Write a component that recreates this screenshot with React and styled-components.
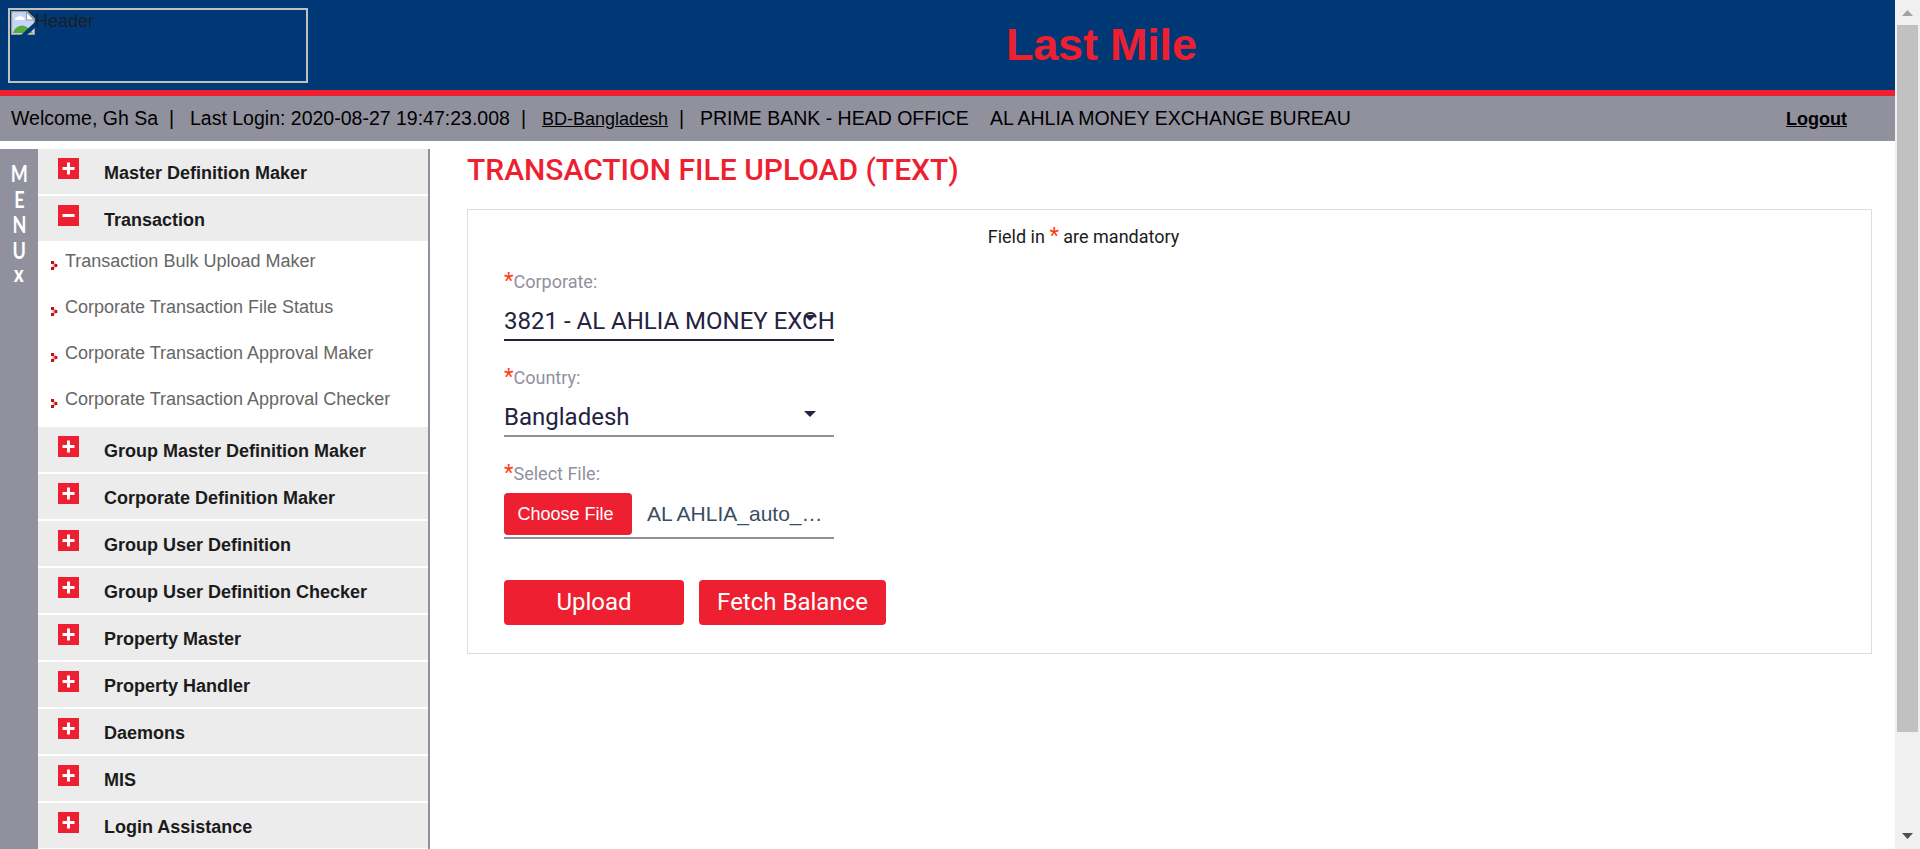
import React from 'react';
import styled, { createGlobalStyle } from 'styled-components';

const RED = '#ee1f30';
const GREY = '#91919e';
const NAVY = '#23233f';
const SANS = '"Liberation Sans", Arial, sans-serif';

const GlobalStyle = createGlobalStyle`
  *, *::before, *::after { box-sizing: border-box; }
  body { margin: 0; background: #fff; font-family: Roboto, "Liberation Sans", sans-serif; overflow: hidden; }
`;

const Screen = styled.div`
  display: flex;
  width: 100%;
  height: 849px;
  overflow: hidden;
`;

const Page = styled.div`
  flex: 1;
  min-width: 0;
  display: flex;
  flex-direction: column;
`;

const Header = styled.header`
  display: flex;
  flex: none;
  height: 96px;
  background: #003876;
  border-bottom: 6px solid ${RED};
  padding: 8px;
`;

const Logo = styled.div`
  display: flex;
  width: 300px;
  height: 75px;
  border: 2px solid #c0c0c0;
  padding: 1px;
  font: 18px/20px ${SANS};
  color: #1b1f24;
`;

const Brand = styled.h1`
  margin: 0 0 0 698px;
  font: bold 45px/52px ${SANS};
  letter-spacing: -0.2px;
  padding-top: 11px;
  height: 63px;
  color: ${RED};
  white-space: nowrap;
`;

const InfoBar = styled.div`
  display: flex;
  flex: none;
  height: 45px;
  padding: 0 48px 0 11px;
  background: ${GREY};
  color: #000;
  font: 19.5px/44px ${SANS};
  white-space: pre;
`;

const Info = styled.span`
  flex: none;
  width: ${(p) => p.$w}px;
`;

const InfoLink = styled.a`
  flex: none;
  width: ${(p) => p.$w || 'auto'};
  margin-left: ${(p) => (p.$end ? 'auto' : 0)};
  font-size: 18px;
  font-weight: ${(p) => (p.$end ? 700 : 400)};
  line-height: 46px;
  text-decoration: underline;
`;

const Body = styled.div`
  display: flex;
  flex: 1;
  min-height: 0;
  padding-top: 8px;
`;

const Strip = styled.div`
  flex: none;
  width: 38px;
  background: ${GREY};
  padding-top: 12px;
  display: flex;
  flex-direction: column;
  align-items: center;
  color: #fff;
  font: 700 22px/25.5px Lato, "Open Sans", sans-serif;
`;

const StripLetter = styled.span`
  height: 25.5px;
  line-height: ${(p) => (p.$bold ? 22 : 25.5)}px;
  transform: scaleX(0.82);
  font-weight: ${(p) => (p.$bold ? 900 : 700)};
`;

const Menu = styled.nav`
  flex: none;
  width: 392px;
  border-right: 2px solid ${GREY};
  font-family: ${SANS};
  overflow: hidden;
`;

const MenuItem = styled.div`
  display: flex;
  gap: 25px;
  height: 45px;
  margin-bottom: ${(p) => (p.$open ? 0 : 2)}px;
  padding: 9px 0 0 20px;
  background: #ececec;
  color: #1b1b1b;
  font-size: 18px;
  font-weight: 700;
  line-height: 31px;
`;

const SubMenu = styled.div`
  height: 186px;
`;

const SubItem = styled.div`
  display: flex;
  gap: 7px;
  height: 46px;
  padding-left: 13px;
  font-size: 18px;
  line-height: 41px;
  color: #666;
  svg { margin-top: 20px; }
`;

const Main = styled.main`
  flex: 1;
  padding: 0 23px 0 37px;
`;

const Title = styled.h2`
  margin: 0;
  height: 60px;
  font-size: 30px;
  font-weight: 500;
  line-height: 41px;
  color: ${RED};
`;

const Panel = styled.section`
  height: 445px;
  border: 1px solid #ddd;
  padding: 17px 36px 0;
`;

const Mandatory = styled.p`
  margin: 0;
  height: 44px;
  padding-right: 172px;
  text-align: center;
  font-size: 18px;
  line-height: 20px;
  color: #1b1b1b;
`;

const Star = styled.span`
  color: #ff3b10;
  font-size: 22px;
  line-height: 1px;
`;

const Field = styled.div`
  width: 330px;
  height: ${(p) => p.$h}px;
`;

const Label = styled.label`
  display: block;
  height: 22px;
  font-size: 18px;
  line-height: 22px;
  color: #91919e;
  white-space: nowrap;
`;

const Select = styled.div`
  position: relative;
  height: 48px;
  border-bottom: 2px solid ${(p) => (p.$active ? NAVY : GREY)};
  color: ${NAVY};
  font-size: 24px;
  line-height: 56px;
  white-space: nowrap;
`;

const Caret = styled.svg`
  position: absolute;
  left: 300px;
  top: 22px;
`;

const FileRow = styled.div`
  display: flex;
  gap: 15px;
  height: 54px;
  padding-top: 8px;
  border-bottom: 2px solid ${GREY};
  font: 21px/42px ${SANS};
  color: #3a4d63;
  white-space: nowrap;
`;

const ChooseFile = styled.button`
  width: 128px;
  height: 42px;
  border: 0;
  border-radius: 4px;
  background: ${RED};
  color: #fff;
  font: 18px/42px ${SANS};
  padding: 0 5px 0 0;
`;

const FileName = styled.span`
  line-height: 42px;
`;

const Actions = styled.div`
  display: flex;
  gap: 15px;
`;

const Action = styled.button`
  width: ${(p) => p.$w}px;
  height: 45px;
  border: 0;
  border-radius: 4px;
  background: ${RED};
  color: #fff;
  font: 24px/45px Roboto, sans-serif;
  padding: 0;
`;

const ScrollBar = styled.div`
  flex: none;
  width: 25px;
  display: flex;
  flex-direction: column;
  align-items: center;
  justify-content: space-between;
  background: #f0f0f0;
  svg { display: block; flex: none; }
`;

const Thumb = styled.div`
  width: 21px;
  height: 707px;
  margin-bottom: auto;
  background: #c1c1c1;
`;

const IconBox = styled.svg`
  flex: none;
`;

const Toggle = ({ open }) => (
  <IconBox width="21" height="21" viewBox="0 0 21 21">
    <rect width="21" height="21" fill={RED} />
    <rect x="4.5" y="9" width="12" height="3" fill="#fff" />
    {!open && <rect x="9" y="4.5" width="3" height="12" fill="#fff" />}
  </IconBox>
);

const Bullet = () => (
  <IconBox width="7" height="9" viewBox="0 0 7 9">
    <path d="M0 0h3v3H0zM0 6h3v3H0zM3.300 3h3v3h-3z" fill="#bb1319" />
    <path d="M1.500 3h1.800v3h-1.800zM3 1.500h1.500v1.500H3zM3 6h1.500v1.500H3z" fill="#e9a9a9" />
  </IconBox>
);

const BrokenImage = () => (
  <IconBox width="24" height="24" viewBox="0 0 24 24">
    <path d="M0 0h16l8 8v16H0z" fill="#fff" />
    <path d="M2 2h14l6 6v14H2z" fill="#c3d5f8" />
    <path d="M4 9q0-3 3-3 2-3 4.500 0 2.500 0 2 3z" fill="#fff" />
    <path d="M2 22q2-7 9-7.500 7 1 11 7.500z" fill="#57ac34" />
    <path d="M.75 23.250V.75H16L23.250 8v15.250z" fill="none" stroke="#9a9a9a" strokeWidth="1.500" />
    <path d="M15.500 1v8H23z" fill="#fff" stroke="#9a9a9a" />
    <path d="M24 11v6l-8 7h-6z" fill="#003876" />
  </IconBox>
);

const Down = () => (
  <Caret width="12" height="6" viewBox="0 0 12 6">
    <path d="M0 0h12L6 6z" fill={NAVY} />
  </Caret>
);

const SUB_ITEMS = [
  'Transaction Bulk Upload Maker',
  'Corporate Transaction File Status',
  'Corporate Transaction Approval Maker',
  'Corporate Transaction Approval Checker',
];

const ITEMS = [
  'Group Master Definition Maker',
  'Corporate Definition Maker',
  'Group User Definition',
  'Group User Definition Checker',
  'Property Master',
  'Property Handler',
  'Daemons',
  'MIS',
  'Login Assistance',
];

export default function App() {
  return (
    <Screen>
      <GlobalStyle />
      <Page>
        <Header>
          <Logo><BrokenImage />Header</Logo>
          <Brand>Last Mile</Brand>
        </Header>
        <InfoBar>
          <Info $w={158}>Welcome, Gh Sa</Info>
          <Info $w={21}>|</Info>
          <Info $w={331}>Last Login: 2020-08-27 19:47:23.008</Info>
          <Info $w={21}>|</Info>
          <InfoLink $w="137px">BD-Bangladesh</InfoLink>
          <Info $w={21}>|</Info>
          <Info $w={290}>PRIME BANK - HEAD OFFICE</Info>
          <span>AL AHLIA MONEY EXCHANGE BUREAU</span>
          <InfoLink $end>Logout</InfoLink>
        </InfoBar>
        <Body>
          <Strip>
            {['M', 'E', 'N', 'U', 'x'].map((c) => (
              <StripLetter key={c} $bold={c === 'x'}>{c}</StripLetter>
            ))}
          </Strip>
          <Menu>
            <MenuItem><Toggle />Master Definition Maker</MenuItem>
            <MenuItem $open><Toggle open />Transaction</MenuItem>
            <SubMenu>
              {SUB_ITEMS.map((t) => (
                <SubItem key={t}><Bullet />{t}</SubItem>
              ))}
            </SubMenu>
            {ITEMS.map((t) => (
              <MenuItem key={t}><Toggle />{t}</MenuItem>
            ))}
          </Menu>
          <Main>
            <Title>TRANSACTION FILE UPLOAD (TEXT)</Title>
            <Panel>
              <Mandatory>Field in <Star>*</Star> are mandatory</Mandatory>
              <Field $h={96}>
                <Label><Star>*</Star>Corporate:</Label>
                <Select $active>3821 - AL AHLIA MONEY EXCH<Down /></Select>
              </Field>
              <Field $h={96}>
                <Label><Star>*</Star>Country:</Label>
                <Select>Bangladesh<Down /></Select>
              </Field>
              <Field $h={117}>
                <Label><Star>*</Star>Select File:</Label>
                <FileRow>
                  <ChooseFile>Choose File</ChooseFile>
                  <FileName>AL AHLIA_auto_…</FileName>
                </FileRow>
              </Field>
              <Actions>
                <Action $w={180}>Upload</Action>
                <Action $w={187}>Fetch Balance</Action>
              </Actions>
            </Panel>
          </Main>
        </Body>
      </Page>
      <ScrollBar>
        <svg width="25" height="25" viewBox="0 0 25 25"><path d="M7 16h11l-5.500-6z" fill="#a3a3a3" /></svg>
        <Thumb />
        <svg width="25" height="25" viewBox="0 0 25 25"><path d="M7 9h11l-5.500 6z" fill="#505050" /></svg>
      </ScrollBar>
    </Screen>
  );
}
